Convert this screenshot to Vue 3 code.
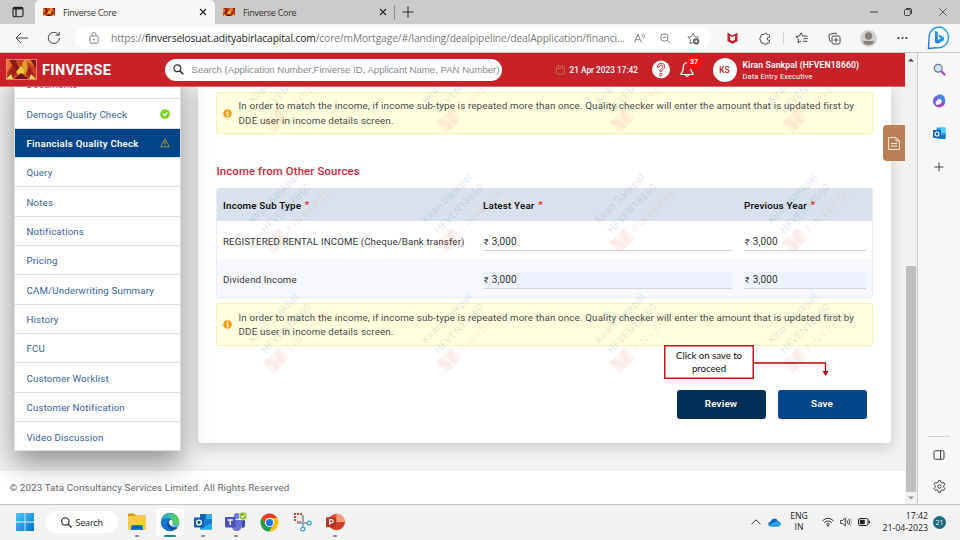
<script setup>
const navItems = [
  { label: 'Documents' },
  { label: 'Demogs Quality Check', icon: 'ok' },
  { label: 'Financials Quality Check', icon: 'warn', active: true },
  { label: 'Query' },
  { label: 'Notes' },
  { label: 'Notifications' },
  { label: 'Pricing' },
  { label: 'CAM/Underwriting Summary' },
  { label: 'History' },
  { label: 'FCU' },
  { label: 'Customer Worklist' },
  { label: 'Customer Notification' },
  { label: 'Video Discussion' },
]
const rows = [
  { name: 'REGISTERED RENTAL INCOME (Cheque/Bank transfer)', latest: '3,000', previous: '3,000' },
  { name: 'Dividend Income', latest: '3,000', previous: '3,000', alt: true },
]
const marks = []
for (const y of [102, 222, 342]) for (const x of [247, 420, 593, 766]) marks.push({ x, y })
</script>

<template>
  <div class="screen">
    <div class="tabstrip">
      <div class="tabmenu">
        <svg width="12" height="12" viewBox="0 0 12 12"><rect x="1" y="1.2" width="10" height="9.6" rx="1.8" fill="none" stroke="#222" stroke-width="1.1" /><path d="M1 2.6h10M4 3v7.5" stroke="#222" stroke-width="1.3" /><rect x="1" y="1" width="10" height="2.3" rx="1" fill="#222" /></svg>
      </div>
      <div v-for="n in 2" :key="n" class="tab" :class="{ on: n === 1 }">
        <svg class="fav" width="12" height="8" viewBox="0 0 30 20"><use href="#fin-logo" /></svg>
        <span>Finverse Core</span>
        <svg class="x" width="8" height="8" viewBox="0 0 8 8"><path d="M1 1l6 6M7 1L1 7" stroke="#222" stroke-width="1.1" /></svg>
      </div>
      <div class="newtab">
        <i></i>
        <svg width="12" height="12" viewBox="0 0 12 12"><path d="M6 .5v11M.5 6h11" stroke="#333" stroke-width="1.1" /></svg>
      </div>
      <div class="winbtns">
        <svg width="8" height="8" viewBox="0 0 8 8"><path d="M0 4h8" stroke="#444" /></svg>
        <svg width="8" height="8" viewBox="0 0 8 8"><rect x=".5" y="1.6" width="5.8" height="5.9" rx="1" fill="none" stroke="#444" /><path d="M2 .5h4q1.5 0 1.5 1.5v4" fill="none" stroke="#444" /></svg>
        <svg width="8" height="8" viewBox="0 0 8 8"><path d="M.3.3l7.4 7.4M7.7.3L.3 7.7" stroke="#444" stroke-width=".8" /></svg>
      </div>
    </div>

    <div class="toolbar">
      <svg class="back" width="13" height="12" viewBox="0 0 13 12"><path d="M13 6H1M6 1L1 6l5 5" fill="none" stroke="#444" stroke-width="1" /></svg>
      <svg class="reload" width="14" height="14" viewBox="0 0 14 14"><path d="M12.5 7A5.6 5.6 0 1 1 10.8 2.9L12 4" fill="none" stroke="#444" stroke-width="1" /><path d="M12.2 .8v3.4H8.6" fill="none" stroke="#444" stroke-width="1" /></svg>
      <div class="address">
        <svg width="10" height="12" viewBox="0 0 10 12"><rect x=".9" y="4" width="8.2" height="7.2" rx="1" fill="none" stroke="#777" stroke-width=".9" /><path d="M3 4V2.6a2 2 0 0 1 4 0V4" fill="none" stroke="#777" stroke-width=".9" /><circle cx="5" cy="7.6" r=".8" fill="#666" /></svg>
        <span class="url">https://<b>finverselosuat.adityabirlacapital.com</b>/core/mMortgage/#/landing/dealpipeline/dealApplication/financi...</span>
        <svg class="read" width="13" height="10" viewBox="0 0 13 10"><path d="M.6 9.500L4 1.200l3.400 8.300M1.800 6.700h4.400" fill="none" stroke="#777" stroke-width=".9" /><path d="M7.800 1.500q1 1.400 0 2.900M9.600.4q1.900 2.500 0 5" fill="none" stroke="#777" stroke-width=".8" /></svg>
        <svg class="mag" width="11" height="11" viewBox="0 0 11 11"><circle cx="4.400" cy="4.400" r="3.700" fill="none" stroke="#777" stroke-width=".9" /><path d="M7.100 7.100l3.400 3.400M2.600 4.400h3.600" stroke="#777" stroke-width=".9" /></svg>
        <svg class="star" width="13" height="13" viewBox="0 0 13 13"><path d="M5.800 10.300L3 11.600l.5-3.800L.8 5.200l3.700-.6L6.200 1.200l1.700 3.400 3.700.6-1.100 1" fill="none" stroke="#666" stroke-width=".9" /><circle cx="9.200" cy="9.300" r="3.100" fill="#555" /><path d="M9.200 7.500v3.600M7.400 9.300H11" stroke="#fff" stroke-width=".9" /></svg>
      </div>
      <div class="exts">
        <svg width="11" height="12" viewBox="0 0 11 12"><path d="M.5 .8L5.500 3.200 10.500 .8V9.200L5.500 11.700 .5 9.200z" fill="#c8202b" /><path d="M3 3.800l2.500 1.300L8 3.800v3.900L5.500 9 3 7.700z" fill="#f7f7f7" /></svg>
        <svg width="13" height="13" viewBox="0 0 13 13"><path d="M4 2.500h1.800a1.700 1.700 0 0 1 3.300 0h1.400q1 0 1 1v1.800H10.700a1.500 1.500 0 0 0 0 3H11.500v1.800q0 1-1 1H9a1.700 1.700 0 0 1-3.300 0H4q-1 0-1-1V8.300A1.700 1.700 0 0 1 3 5V3.500q0-1 1-1z" fill="none" stroke="#444" stroke-width="1" /></svg>
        <i></i>
        <svg width="13" height="12" viewBox="0 0 13 12"><path d="M6 9L3 10.800l.6-3.700L.8 4.600l3.700-.6L6.100.8l1.700 3.300H12.500M8.500 6.700h4M8 9.300h4.500" fill="none" stroke="#444" stroke-width="1" /></svg>
        <svg width="13" height="13" viewBox="0 0 13 13"><rect x="4" y="4" width="8" height="8" rx="1.600" fill="none" stroke="#444" /><path d="M8 5.800v4.400M5.800 8h4.400M3 9.600Q1.800 9.400 1.500 8L.9 3.900Q.8 2.600 2.100 2.300L7 1.100q1.500-.2 1.900 1.400" fill="none" stroke="#444" /></svg>
        <svg width="17" height="17" viewBox="0 0 17 17"><circle cx="8.500" cy="8.500" r="8.500" fill="#d4d2d0" /><circle cx="8.500" cy="6" r="3.700" fill="#85817e" /><path d="M3.200 11h10.600q0 4-5.300 4t-5.300-4z" fill="#85817e" /></svg>
        <svg width="11" height="4" viewBox="0 0 11 4"><circle cx="1.500" cy="2" r="1.100" fill="#333" /><circle cx="5.500" cy="2" r="1.100" fill="#333" /><circle cx="9.500" cy="2" r="1.100" fill="#333" /></svg>
      </div>
      <svg class="bing" width="24" height="24" viewBox="0 0 24 24"><defs><linearGradient id="bg1" x1="0" y1="1" x2="1" y2="0"><stop offset="0" stop-color="#2a6fe0" /><stop offset="1" stop-color="#35b6ee" /></linearGradient></defs><path d="M12.500 1a10.500 10.500 0 1 1-3.500 20.700L1.500 22.500 2 11.500A10.500 10.500 0 0 1 12.500 1z" fill="#f5faff" stroke="url(#bg1)" stroke-width="1.400" /><path d="M8 4.800l2.800 1.100v8l3.100-1.700-1.600-1-.9-2.600 5.600 2.300v3.300l-6.200 3.600L8 16.200z" fill="url(#bg1)" /></svg>
    </div>

    <div class="middle">
      <div class="page">
        <header class="apphead">
          <svg class="logo" width="31" height="21" viewBox="0 0 31 21">
            <g id="fin-logo"><rect width="30" height="20" fill="#c9401f" /><path d="M0 0h9l6 9 5-9h10v9L22 3 15 20 8 4 0 14z" fill="#e8752c" /><path d="M3 0h6l5 10-4 4z" fill="#8a1a16" /><path d="M0 20l7-15 4 9-6 6z" fill="#a3221a" /><path d="M15 7l4 5-4 6-5-5z" fill="#f0c93a" /><path d="M16 5l3-5 3 9-3 8z" fill="#dca12b" /><path d="M30 20l-7-14-3 9 5 5z" fill="#a3221a" /><path d="M0 20l5-5 2 5zM30 20l-5-5-2 5z" fill="#f7dc55" /><path d="M8 20l7-6 7 6z" fill="#6f1313" /><path d="M24 0h6v10z" fill="#7f1916" /></g>
            <rect x=".5" y=".5" width="30" height="20" fill="none" stroke="#e29a86" stroke-width=".8" />
          </svg>
          <span class="brand">FINVERSE</span>
          <div class="search">
            <svg width="11" height="11" viewBox="0 0 11 11"><circle cx="4.300" cy="4.300" r="3.400" fill="none" stroke="#333" stroke-width="1.300" /><path d="M6.900 6.900l3.400 3.400" stroke="#333" stroke-width="1.500" /></svg>
            <span>Search (Application Number,Finverse ID, Applicant Name, PAN Number)</span>
          </div>
          <svg class="cal" width="9" height="10" viewBox="0 0 9 10"><rect x=".5" y="1.500" width="8" height="7.500" rx=".8" fill="none" stroke="#c5673f" /><path d="M.5 3.700h8M2.500 0v2M6.500 0v2" stroke="#c5673f" /></svg>
          <span class="date">21 Apr 2023 17:42</span>
          <svg class="help" width="18" height="19" viewBox="0 0 18 19"><circle cx="9" cy="9.500" r="9" fill="#fff" /><path d="M5.400 7.200Q5.600 3.300 9.200 3.200q3.600.2 3.600 3.300 0 2-2.200 3.100-1 .6-1 2.200H7.900q-.1-2.700 1.700-3.500 1.200-.7 1.100-1.800-.2-1.300-1.500-1.400Q7.500 5.200 7.400 7.200z" fill="#fff" stroke="#c8202b" stroke-width=".9" /><circle cx="8.800" cy="14.700" r="1.300" fill="#fff" stroke="#c8202b" stroke-width=".9" /></svg>
          <div class="bell">
            <svg width="14" height="17" viewBox="0 0 14 17"><path d="M7 1.500q-3.700.7-3.700 4.800 0 4.300-2.300 6.200v1h12v-1q-2.300-1.900-2.300-6.200Q10.700 2.200 7 1.500zM5.300 14q1.700 2.800 3.400 0" fill="none" stroke="#fff" stroke-width="1.200" /></svg>
            <b>37</b>
          </div>
          <div class="avatar">KS</div>
          <div class="user"><b>Kiran Sankpal (HFVEN18660)</b><span>Data Entry Executive</span></div>
        </header>

        <div class="body">
          <nav class="side">
            <div v-for="i in navItems" :key="i.label" class="item" :class="{ active: i.active }">
              <span>{{ i.label }}</span>
              <svg v-if="i.icon === 'ok'" width="10" height="10" viewBox="0 0 10 10"><circle cx="5" cy="5" r="4.800" fill="#7fd321" /><path d="M2.800 5.100l1.600 1.600 3-3.200" fill="none" stroke="#fff" stroke-width="1.200" /></svg>
              <svg v-if="i.icon === 'warn'" width="10" height="10" viewBox="0 0 10 10"><path d="M5 .9l4.400 8H.6z" fill="none" stroke="#b39a3b" stroke-width=".9" stroke-linejoin="round" /><path d="M5 3.300v3M5 7v1" stroke="#c9a227" stroke-width="1" /></svg>
            </div>
          </nav>

          <main class="card">
            <div class="notice first">
              <svg width="9" height="9" viewBox="0 0 9 9"><circle cx="4.500" cy="4.500" r="4.300" fill="#fc9d0b" /><path d="M4.700 1.500v1.200M3.500 3.900h1.200v2.700M3.300 6.700h2.700" stroke="#fff" stroke-width="1.100" fill="none" /></svg>
              <p>In order to match the income, if income sub-type is repeated more than once. Quality checker will enter the amount that is updated first by<br />DDE user in income details screen.</p>
            </div>
            <h2>Income from Other Sources</h2>
            <div class="table">
              <div class="tr th">
                <div>Income Sub Type <em>*</em></div>
                <div>Latest Year <em>*</em></div>
                <div>Previous Year <em>*</em></div>
              </div>
              <div v-for="r in rows" :key="r.name" class="tr" :class="{ alt: r.alt }">
                <div>{{ r.name }}</div>
                <div class="field"><small>₹</small> {{ r.latest }}</div>
                <div class="field"><small>₹</small> {{ r.previous }}</div>
              </div>
            </div>
            <div class="notice second">
              <svg width="9" height="9" viewBox="0 0 9 9"><circle cx="4.500" cy="4.500" r="4.300" fill="#fc9d0b" /><path d="M4.700 1.500v1.200M3.500 3.900h1.200v2.700M3.300 6.700h2.700" stroke="#fff" stroke-width="1.100" fill="none" /></svg>
              <p>In order to match the income, if income sub-type is repeated more than once. Quality checker will enter the amount that is updated first by<br />DDE user in income details screen.</p>
            </div>
            <div class="actions">
              <button class="review">Review</button>
              <button class="save">Save</button>
            </div>
          </main>

          <svg class="marks" width="905" height="384" viewBox="0 87 905 384">
            <g v-for="m in marks" :key="m.x + '-' + m.y" :transform="`translate(${m.x} ${m.y})`">
              <text transform="translate(6 2) rotate(-45)" class="wm blue" textLength="65">Kiran Sankpal</text>
              <text transform="translate(18.500 12) rotate(-45)" class="wm blue" textLength="65">HFVEN18660</text>
              <text transform="translate(44 11) rotate(-45)" class="wm red" textLength="56">FINVERSE</text>
              <g transform="translate(29 18.500) rotate(-45)"><rect x="-11" y="-7.500" width="22" height="15" class="tint" /><path d="M-11 -7.500L-5.500 2 -7 7.500H-2L0 -1 2 7.500H7L5.500 2 11 -7.500H5L0 2-5 -7.500z" class="tint" /></g>
            </g>
          </svg>
          <div class="dock">
            <svg width="12" height="13" viewBox="0 0 12 13"><path d="M.6.600H8L11.400 4V12.400H.6zM8 .6V4h3.400M3 6.500h6M3 9h6" fill="none" stroke="#f5e7dc" stroke-width="1" /></svg>
          </div>
          <div class="callout">Click on save to<br />proceed</div>
          <svg class="arrow" width="77" height="18" viewBox="0 0 77 18"><path d="M0 3h72.500v10" fill="none" stroke="#c00000" stroke-width="1.300" /><path d="M69.500 11h6l-3 5z" fill="#c00000" /></svg>
        </div>
        <footer class="foot">© 2023 Tata Consultancy Services Limited. All Rights Reserved</footer>
      </div>

      <div class="scroll">
        <svg width="6" height="4" viewBox="0 0 6 4"><path d="M0 3.600h6L3 .4z" fill="#444" /></svg>
        <div class="thumb"></div>
        <svg width="6" height="4" viewBox="0 0 6 4"><path d="M0 .4h6L3 3.600z" fill="#999" /></svg>
      </div>

      <div class="edgebar">
        <svg width="13" height="13" viewBox="0 0 13 13"><path d="M7.800 7.800l3.700 3.700" stroke="#a541d8" stroke-width="2.200" stroke-linecap="round" /><circle cx="5.200" cy="5.200" r="3.900" fill="#cfe6f5" stroke="#667684" stroke-width="1.200" /></svg>
        <svg width="14" height="14" viewBox="0 0 14 14"><path d="M7.500.5Q1 2 .8 7q0 3.500 3.400 5Q3 8.500 5 6.500L9.500 4Q9.500 1 7.500.5z" fill="#7c63d9" /><path d="M7 .5h2.500q3.700 1.300 3.700 6.500 0 2-.7 3Q10 10 9.700 7.500 9.500 5 6 4.500 5.300 2 7 .5z" fill="#4a86dd" /><path d="M13 8.500q-.8 4.700-6.500 5-3.700-.8-3.700-3Q9 11.500 9.700 7.500q1.500 2 3.300 1z" fill="#9a4bb8" /><circle cx="7.200" cy="7.200" r="2.200" fill="#f4f3fb" /></svg>
        <svg width="13" height="13" viewBox="0 0 13 13"><rect x="3.500" y=".5" width="9" height="11.500" rx="1" fill="#2aa5ea" /><path d="M8 .5h4.500V6H8z" fill="#50d0fb" /><path d="M3.500 8l4 4h5V6.500L8 9z" fill="#1373c8" /><rect y="3" width="8" height="8" rx="1" fill="#0f64b8" /><circle cx="4" cy="7" r="2" fill="none" stroke="#fff" stroke-width="1.100" /></svg>
        <svg width="10" height="10" viewBox="0 0 10 10"><path d="M5 .5v9M.5 5h9" stroke="#444" /></svg>
        <hr />
        <svg width="12" height="10" viewBox="0 0 12 10"><rect x="1" y=".7" width="10" height="8.600" rx="1.400" fill="none" stroke="#444" /><path d="M7.500 .7v8.600" stroke="#444" /></svg>
        <svg width="13" height="13" viewBox="0 0 13 13"><path d="M5.400.700h2.200l.4 1.700 1.100.6 1.600-.5 1.200 2-1.200 1.200v1.500l1.200 1.200-1.200 2-1.600-.5-1.100.6-.4 1.700H5.400L5 10.500l-1.100-.6-1.600.5-1.200-2L2.300 7.200V5.700L1.100 4.500l1.200-2 1.600.5L5 2.400z" fill="none" stroke="#444" /><circle cx="6.500" cy="6.500" r="1.700" fill="none" stroke="#444" /></svg>
      </div>
    </div>

    <div class="taskbar">
      <svg class="start" width="18" height="18" viewBox="0 0 18 18"><defs><linearGradient id="wg" x1="0" y1="0" x2="1" y2="1"><stop offset="0" stop-color="#4cc8fb" /><stop offset="1" stop-color="#0672cf" /></linearGradient></defs><path d="M0 0h8.600v8.600H0zM9.400 0H18v8.600H9.400zM0 9.400h8.600V18H0zM9.400 9.400H18V18H9.400z" fill="url(#wg)" /></svg>
      <div class="tsearch">
        <svg width="11" height="11" viewBox="0 0 11 11"><circle cx="4.400" cy="4.400" r="3.700" fill="none" stroke="#222" stroke-width="1.100" /><path d="M7.200 7.200l3.300 3.300" stroke="#222" stroke-width="1.200" /></svg>
        <span>Search</span>
      </div>
      <div class="apps">
        <div class="app run"><svg width="20" height="20" viewBox="0 0 20 20"><path d="M1 2.500q0-1 1-1h5l2 2h9q1 0 1 1V8H1z" fill="#d9960f" /><rect x="1" y="4" width="18" height="14" rx="1" fill="#fbcb45" /><path d="M4 18v-3q0-2 2-2h8q2 0 2 2v3z" fill="#1374bf" /><path d="M6.500 15.500h7" stroke="#0b4b87" stroke-width="1.200" /></svg></div>
        <div class="app current"><svg width="20" height="20" viewBox="0 0 20 20"><defs><linearGradient id="eg" x1="0" y1="0" x2="1" y2="0"><stop offset="0" stop-color="#25a6e5" /><stop offset="1" stop-color="#5bd94c" /></linearGradient></defs><circle cx="10" cy="10" r="9.200" fill="#1474cc" /><path d="M.9 9A9.200 9.200 0 0 1 19.200 9.500q0 4-4.200 4-3 0-2.500-1.700 1-1.800-.3-3.600Q10 5.500 6.400 6 2.500 6.500.9 9z" fill="url(#eg)" /><path d="M8.500 9q-2 1.800-.8 5 1.800 4 7 3.700 1.500-.3 2.700-1.600-5 1.200-7.300-2-1.500-2.600-1.600-5.100z" fill="#0d478f" /><path d="M10.200 8q-1.500 1-1.200 3 .7 3 4.500 3.500l4.200-.2 1-1.300q-1.500 1-4.200.7-2.700-.5-2-1.900 1-1.800-.5-3.800z" fill="#f2f7fa" /></svg></div>
        <div class="app run"><svg width="19" height="18" viewBox="0 0 19 18"><rect x="6" y="1" width="12" height="15.500" rx="1" fill="#1585d8" /><path d="M6 1h6v5H6z" fill="#1068b8" /><path d="M12 1h6v5h-6z" fill="#36aef0" /><path d="M12 6h6v5h-6z" fill="#1579cf" /><path d="M6 16.500L18 9.500v7z" fill="#2aa6ed" /><rect y="4.500" width="10" height="10" rx="1" fill="#0f5fae" /><circle cx="5" cy="9.500" r="2.400" fill="none" stroke="#fff" stroke-width="1.400" /></svg></div>
        <div class="app run"><svg width="22" height="20" viewBox="0 0 22 20"><circle cx="12" cy="4" r="3" fill="#7076d8" /><path d="M7 8h10v6q-1 5-5.500 5T7 14z" fill="#6970d2" /><path d="M17 8h3v5q0 3-3 3z" fill="#444bb0" /><rect x="0" y="5" width="10.500" height="10.500" rx="1" fill="#484fb5" /><path d="M2.600 8h5.300M5.250 8v5" stroke="#fff" stroke-width="1.400" /><circle cx="18" cy="4" r="4" fill="#84bd12" stroke="#f2f2f2" stroke-width=".7" /><path d="M16 4l1.500 1.500L20.200 2.800" fill="none" stroke="#fff" stroke-width="1.200" /></svg></div>
        <div class="app"><svg width="19" height="19" viewBox="0 0 20 20"><circle cx="10" cy="10" r="9.500" fill="#fbbf10" /><path d="M1.800 5.200A9.500 9.500 0 0 1 18.200 5.300H10L6 12.400z" fill="#e43b2e" /><path d="M1.800 5.200A9.500 9.500 0 0 0 9.700 19.500L14 12.300 6 12.300z" fill="#1f9d4d" /><circle cx="10" cy="10" r="4.800" fill="#fff" /><circle cx="10" cy="10" r="3.800" fill="#1a73e8" /></svg></div>
        <div class="app"><svg width="19" height="20" viewBox="0 0 19 20"><path d="M9 2H2v8" fill="none" stroke="#d9472f" stroke-width="2" stroke-dasharray="2 1" /><path d="M4 9.500h4.500M9.300 3v5" fill="none" stroke="#d9472f" stroke-width="1.200" stroke-dasharray="1.500 1" /><path d="M10 3.500v11M4 11h10.500" fill="none" stroke="#9aa3aa" stroke-width="2" /><circle cx="16.200" cy="11" r="1.900" fill="none" stroke="#2c9fe0" stroke-width="1.200" /><circle cx="9.800" cy="17" r="1.900" fill="none" stroke="#2c9fe0" stroke-width="1.200" /></svg></div>
        <div class="app run"><svg width="19" height="18" viewBox="0 0 19 18"><circle cx="10.500" cy="9" r="8.300" fill="#e2583a" /><path d="M10.500.7a8.300 8.300 0 0 1 8.300 8.300h-8.300z" fill="#f59a7c" /><path d="M2.200 9h16.600a8.300 8.300 0 0 1-16.600 0z" fill="#c9432b" /><rect y="4.200" width="10" height="10" rx="1" fill="#b7341f" /><path d="M3.700 12V6.700h1.700q1.900 0 1.900 1.500T5.400 9.800H3.700" fill="none" stroke="#fff" stroke-width="1.200" /></svg></div>
      </div>
      <div class="tray">
        <svg class="up" width="10" height="6" viewBox="0 0 10 6"><path d="M.5 5.300L5 .8l4.500 4.500" fill="none" stroke="#333" stroke-width="1" /></svg>
        <svg class="cloud" width="13" height="9" viewBox="0 0 13 9"><path d="M3 8.500Q.3 8.300.3 6 .5 3.900 2.700 3.600 3.800.5 6.700.5q2.500.2 3.300 2.700 2.700.4 2.700 2.800-.2 2.300-2.700 2.500z" fill="#1066bd" /><path d="M3 8.500q-2-.2-2.500-1.500L7 3.800q2-1 3.500-.5 2.200.8 2.200 2.700-.2 2.300-2.700 2.500z" fill="#2aa1ea" /></svg>
        <div class="lang">ENG<br />IN</div>
        <svg class="wifi" width="12" height="10" viewBox="0 0 12 10"><path d="M.5 3.800q5.500-5 11 0M2.200 5.700q3.800-3.300 7.600 0M3.900 7.400q2.100-1.700 4.200 0" fill="none" stroke="#333" stroke-width="1" /><circle cx="6" cy="8.700" r=".9" fill="#333" /></svg>
        <svg class="vol" width="12" height="10" viewBox="0 0 12 10"><path d="M.6 3.500h2L5.300 1v8L2.600 6.500h-2zM7 3.300q1.200 1.700 0 3.400M8.600 2q2 3 0 6" fill="none" stroke="#333" stroke-width=".9" /><path d="M10.200.8q2.400 4.200 0 8.400" fill="none" stroke="#999" stroke-width=".8" /></svg>
        <svg class="bat" width="12" height="8" viewBox="0 0 12 8"><rect x=".5" y=".5" width="9.500" height="7" rx="1.600" fill="none" stroke="#222" /><rect x="1.800" y="1.800" width="5" height="4.400" fill="#222" /><path d="M11.300 2.700v2.600" stroke="#222" stroke-width="1.300" /></svg>
        <div class="clock">17:42<br />21-04-2023</div>
        <div class="count">21</div>
      </div>
    </div>
  </div>
</template>

<style>
body { margin: 0; overflow: hidden; }
</style>

<style scoped>
* { box-sizing: border-box; }
svg { display: block; flex: none; overflow: visible; }
.screen { width: 960px; height: 540px; display: flex; flex-direction: column; background: #f7f7f7; font-family: Roboto, "Noto Sans", sans-serif; white-space: nowrap; overflow: hidden; }
.tabstrip { height: 24px; background: #cbcbcb; display: flex; align-items: center; font: 9px "Open Sans", "Noto Sans", sans-serif; color: #333; flex: none; }
.tabmenu { width: 35px; padding-left: 12px; }
.tab { width: 180px; height: 24px; padding: 0 8px 0 8px; display: flex; align-items: center; gap: 8px; letter-spacing: -0.3px; }
.tab.on { background: #f7f7f7; border-radius: 5px 5px 0 0; }
.tab .x { margin-left: auto; }
.newtab { display: flex; align-items: center; gap: 6.500px; }
.newtab i { width: 1px; height: 15px; background: #8f8f8f; margin-left: -1px; }
.winbtns { margin-left: auto; display: flex; gap: 26.500px; padding-right: 13.500px; }
.toolbar { height: 29px; flex: none; display: flex; align-items: center; border-bottom: 1px solid #c8c8c8; }
.back { margin-left: 14.500px; }
.reload { margin-left: 19.500px; }
.address { width: 636px; height: 22px; margin-left: 14px; border-radius: 11px; background: #fff; display: flex; align-items: center; padding-left: 14px; font: 10.300px "Open Sans", "Noto Sans", sans-serif; color: #7a7a7a; flex: none; }
.url { width: 513px; margin-left: 12px; letter-spacing: -0.14px; }
.url b { font-weight: 400; color: #222; }
.read { margin-left: 10px; }
.mag { margin-left: 13px; }
.star { margin-left: 16px; }
.exts { margin-left: 16px; display: flex; align-items: center; }
.exts svg:nth-child(2) { margin-left: 20px; }
.exts i { width: 1px; height: 12px; background: #d5d5d5; margin: 0 10.500px 0 12px; }
.exts svg:nth-child(5) { margin-left: 20px; }
.exts svg:nth-child(6) { margin-left: 19px; }
.exts svg:nth-child(7) { margin-left: 20.500px; }
.bing { margin: 0 0 0 18.500px; }
.middle { height: 451px; flex: none; display: flex; }
.page { width: 905px; display: flex; flex-direction: column; background: #f2f2f2; overflow: hidden; }
.apphead { height: 34px; flex: none; background: #c7222a; color: #fff; display: flex; align-items: center; padding-left: 6px; position: relative; z-index: 5; border-bottom: 1px solid #da6a70; }
.brand { width: 80px; margin: 2px 0 0 5px; font-size: 14.500px; font-weight: 700; letter-spacing: 0.35px; }
.search { width: 337px; height: 22px; margin-left: 43px; border-radius: 11px; background: #fff; display: flex; align-items: center; padding-left: 8px; gap: 7px; color: #8a8a8a; font: 9.600px "Liberation Sans", sans-serif; }
.search span { margin-left: 0.500px; }
.cal { margin-left: 54px; }
.date { width: 70px; margin: 1px 0 0 4.500px; font-size: 8.300px; font-weight: 500; }
.help { margin-left: 12.500px; }
.bell { position: relative; margin-left: 10px; }
.bell b { position: absolute; left: 6.500px; top: -6.500px; width: 15px; height: 15px; border-radius: 50%; background: #f8100c; font-size: 7px; line-height: 15px; text-align: center; }
.avatar { width: 24px; height: 24px; border-radius: 50%; background: #fff; color: #bf3034; font-size: 8.300px; font-weight: 600; line-height: 24px; text-align: center; margin-left: 18.500px; }
.user { display: flex; flex-direction: column; margin: 2px 0 0 6px; font-size: 7.400px; line-height: 11px; }
.user b { font-size: 8.600px; font-weight: 600; letter-spacing: 0.14px; }
.user span { letter-spacing: 0.150px; }
.body { height: 384px; flex: none; display: flex; position: relative; padding-left: 14px; }
.side { width: 167px; height: 381.400px; margin-top: -17px; background: #fff; border: 1px solid #dedede; border-top: 0; flex: none; box-shadow: 0 12px 26px rgba(0, 0, 0, 0.4); position: relative; z-index: 1; }
.item { height: 29.350px; display: flex; align-items: center; justify-content: space-between; padding: 1.200px 10.500px 0 11.500px; border-bottom: 1px solid #dedede; color: #37629c; font-size: 9.700px; letter-spacing: 0.16px; }
.item:last-child { border-bottom: 0; }
.item.active { background: #004489; color: #fff; font-weight: 600; letter-spacing: 0.24px; }
.card { width: 693px; height: 356px; margin-left: 17px; padding: 5px 18px 0; background: #fff; border-radius: 0 0 4px 4px; box-shadow: 0 4px 14px rgba(0, 0, 0, 0.18); display: flex; flex-direction: column; }
.notice { height: 42px; flex: none; border: 1px solid #f5f0b4; border-radius: 3px; background: #ffffdf; display: flex; align-items: center; padding-left: 6px; color: #4a4a4a; font-size: 9.800px; }
.notice p { margin: 1px 0 0 6.500px; line-height: 14.500px; letter-spacing: 0.136px; }
h2 { margin: 27.500px 0 0; height: 20px; line-height: 20px; color: #c7283a; font-size: 11.300px; font-weight: 500; letter-spacing: 0.160px; padding-left: 0.500px; }
.table { margin-top: 6.500px; border: 1px solid #e9ecf2; border-top-color: #d9e2ec; border-radius: 3px; overflow: hidden; flex: none; height: 110px; }
.tr { height: 38px; display: grid; grid-template-columns: 248px 249px 122px; column-gap: 12px; align-items: center; padding: 3px 0 0 6px; color: #333; font-size: 9.700px; letter-spacing: 0.130px; }
.tr.th { height: 32px; padding: 0 0 0 6px; background: #d9e2ec; color: #111; font-weight: 600; font-size: 9.800px; letter-spacing: 0.170px; }
.th em { color: #f02020; font-style: normal; position: relative; top: -1px; left: 1px; }
.tr.alt { background: #f7f8ff; }
.field { height: 17px; line-height: 16px; margin-top: 2px; border-bottom: 1px solid #d3d6da; padding-left: 1px; font-size: 10px; letter-spacing: 0.15px; }
.field small { font-size: 8.500px; margin-right: 0.500px; }
.alt .field { background: #eef2ff; }
.second { margin-top: 5px; height: 43px; }
.actions { display: flex; justify-content: flex-end; gap: 12px; margin-top: 44px; padding-right: 6.500px; }
button { width: 89px; height: 28.500px; border: 0; border-radius: 3px; color: #fff; font: 600 9.800px Roboto, sans-serif; letter-spacing: 0.2px; padding: 0 0 1px; }
.review { background: #032f57; }
.save { background: #00448a; }
.marks { position: absolute; left: 0; top: 0; z-index: 2; overflow: hidden; pointer-events: none; }
.wm { font: 10.500px Roboto, sans-serif; }
.blue { fill: rgba(70, 110, 165, 0.18); }
.red { fill: rgba(225, 70, 60, 0.11); }
.tint { fill: rgba(225, 80, 60, 0.055); }
.dock { position: absolute; right: 0; top: 38px; width: 22px; height: 36px; border-radius: 4px 0 0 4px; background: #b97f56; display: flex; align-items: center; justify-content: center; z-index: 3; }
.callout { position: absolute; left: 664px; top: 258px; width: 90px; height: 34px; background: #fff; border: 1.500px solid #c4141c; text-align: center; color: #111; font: 9.700px/13px Lato, sans-serif; letter-spacing: -0.05px; padding-top: 3px; z-index: 3; box-shadow: inset 0 0 0 0.500px #c4141c; }
.arrow { position: absolute; left: 753px; top: 273px; z-index: 3; }
.foot { height: 33px; flex: none; background: #fff; padding-left: 9.500px; line-height: 34px; color: #666; font-size: 9.800px; letter-spacing: 0.110px; }
.scroll { width: 13px; background: #f1f1f1; border-right: 1px solid #c6c6c6; display: flex; flex-direction: column; align-items: center; padding: 5px 0 4px; }
.thumb { width: 10px; height: 226px; background: #bfbfbf; margin: auto 0 4px; }
.edgebar { width: 42px; display: flex; flex-direction: column; align-items: center; padding-top: 10px; }
.edgebar svg:nth-child(2) { margin-top: 18px; }
.edgebar svg:nth-child(3) { margin-top: 19px; }
.edgebar svg:nth-child(4) { margin-top: 22px; }
.edgebar hr { width: 22px; border: 0; border-top: 1px solid #d0d0d0; margin: auto 0 12.500px; }
.edgebar svg:last-child { margin: 20.500px 0 11px; }
.taskbar { height: 36px; flex: none; background: #f2f2f2; border-top: 1px solid #c4c4c4; display: flex; align-items: center; font: 9px "Open Sans", "Noto Sans", sans-serif; color: #222; }
.start { margin: -1px 0 0 16px; }
.tsearch { width: 73px; height: 22px; margin: -1px 0 0 11px; border-radius: 11px; background: #fff; display: flex; align-items: center; gap: 3.500px; padding-left: 16px; letter-spacing: -0.2px; }
.apps { display: flex; gap: 5px; margin: -1px 0 0 5px; }
.app { width: 28px; height: 28px; display: flex; align-items: center; justify-content: center; border-radius: 3px; position: relative; }
.app.current { background: #fcfcfc; }
.run::after, .current::after { content: ""; position: absolute; bottom: -1px; left: 12px; width: 4px; height: 2px; border-radius: 1px; background: #8a8a8a; }
.current::after { left: 8px; width: 12px; background: #228894; }
.tray { margin-left: auto; display: flex; align-items: center; padding-right: 14px; margin-top: -1px; }
.cloud { margin-left: 7px; }
.lang { width: 20px; margin-left: 8.500px; text-align: center; font-size: 8.700px; line-height: 11px; }
.wifi { margin-left: 13px; }
.vol { margin-left: 6px; }
.bat { margin-left: 6px; }
.clock { width: 49px; margin-left: 9px; text-align: right; font-size: 8.800px; line-height: 12px; letter-spacing: -0.05px; }
.count { width: 13px; height: 13px; margin-left: 5px; border-radius: 50%; background: #1d6a7c; color: #fff; font-size: 7px; line-height: 13px; text-align: center; }
</style>
